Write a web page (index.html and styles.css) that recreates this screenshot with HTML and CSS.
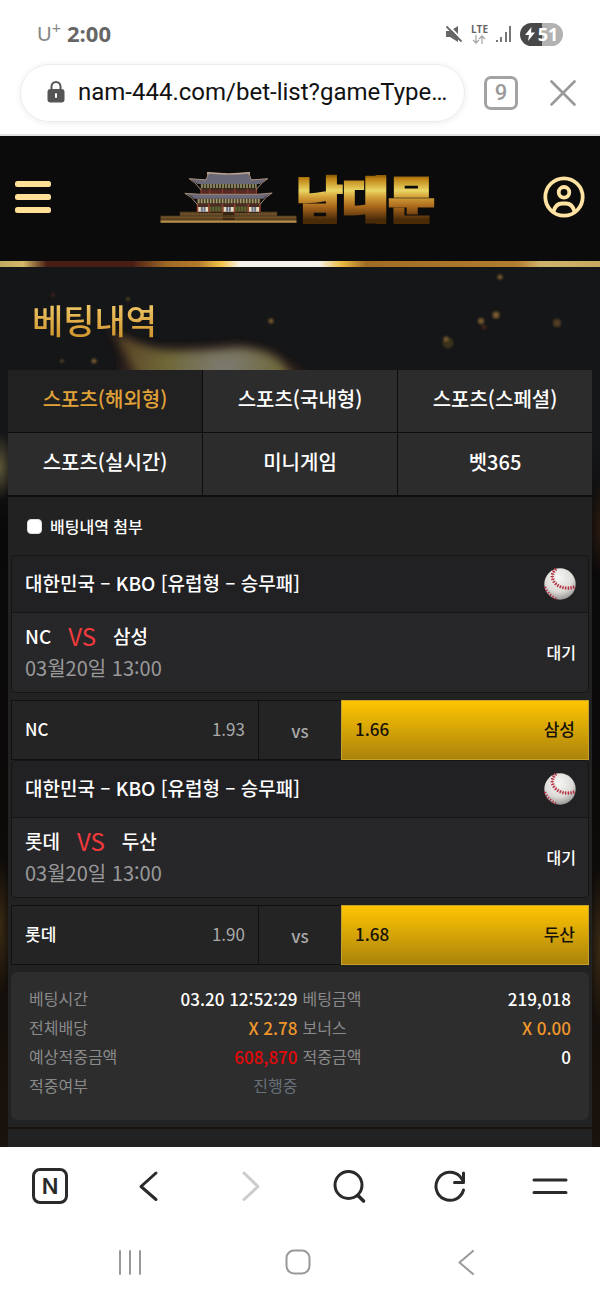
FILE: index.html
```html
<!DOCTYPE html>
<html lang="ko">
<head>
<meta charset="utf-8">
<meta name="viewport" content="width=device-width, initial-scale=1">
<title>베팅내역</title>
<link rel="stylesheet" href="styles.css">
</head>
<body>
<svg class="defs" aria-hidden="true">
  <defs>
    <radialGradient id="ballShade" cx="0.45" cy="0.3" r="0.75">
      <stop offset="0" stop-color="#f7f7f5"/><stop offset="0.6" stop-color="#dcdbd8"/><stop offset="1" stop-color="#8c8a88"/>
    </radialGradient>
    <symbol id="baseball" viewBox="0 0 32 32">
      <circle cx="16" cy="16" r="15.7" fill="url(#ballShade)"/>
      <path d="M12 1C6 6 8 14 14 17.500C19 20.500 26 21 31 18.500" fill="none" stroke="#c98a8c" stroke-width="0.8"/>
      <path d="M12 1C6 6 8 14 14 17.500C19 20.500 26 21 31 18.500" fill="none" stroke="#b5283c" stroke-width="3.400" stroke-dasharray="1.200 1.500"/>
      <path d="M1 19C3.500 25 8 29 13 31" fill="none" stroke="#b5283c" stroke-width="2.400" stroke-dasharray="1.200 1.800"/>
    </symbol>
  </defs>
</svg>

<header class="browser">
  <div class="status">
    <div class="status-left"><span class="carrier">U<sup>+</sup></span><span class="clock">2:00</span></div>
    <div class="status-right">
      <svg width="18" height="18" viewBox="0 0 18 18" aria-label="무음">
        <path d="M1 6h4l8-5v16L5 12H1z" fill="#666"/>
        <path d="M3 0L18 15.500" stroke="#fff" stroke-width="1.800"/>
        <path d="M1.500 1.500L16.500 16.500" stroke="#666" stroke-width="1.800"/>
      </svg>
      <span class="lte">LTE<svg width="14" height="9" viewBox="0 0 14 9" fill="none" stroke="#aaa" stroke-width="1.300"><path d="M4 0v8M1 5l3 3l3-3M10 9V1M7 4l3-3l3 3"/></svg></span>
      <svg width="16" height="17" viewBox="0 0 16 17" fill="#777" aria-label="신호"><path d="M0 14h2v2H0zM4 11h2v5H4zM9 6h2v10H9zM13 0h2v16h-2z"/></svg>
      <span class="battery"><svg width="10" height="14" viewBox="0 0 10 14"><path d="M6.500 0L0 8h4L3 14l7-8.500H6z" fill="#fff"/></svg>51</span>
    </div>
  </div>
  <div class="address-row">
    <label class="address">
      <svg width="18" height="22" viewBox="0 0 18 22" aria-hidden="true">
        <path d="M4.500 9V5.500a4.500 4.500 0 0 1 9 0V9" fill="none" stroke="#555" stroke-width="2"/>
        <rect x="0.500" y="8" width="17" height="13.500" rx="3" fill="#555"/><rect x="8" y="12" width="2" height="5" rx="1" fill="#fff"/>
      </svg>
      <input class="address-input" type="text" aria-label="주소" value="nam-444.com/bet-list?gameType…">
    </label>
    <button class="tab-count" type="button" aria-label="탭">9</button>
    <button class="plain" type="button" aria-label="닫기">
      <svg width="26" height="26" viewBox="0 0 26 26" fill="none" stroke="#999" stroke-width="2.600" stroke-linecap="round"><path d="M1.500 1.500L24.500 24.500M24.500 1.500L1.500 24.500"/></svg>
    </button>
  </div>
</header>

<div class="site-header">
  <button class="plain" type="button" aria-label="메뉴">
    <svg width="36" height="32" viewBox="0 0 36 32" fill="#ffe096"><rect y="0" width="36" height="6" rx="2.500"/><rect y="13" width="36" height="6" rx="2.500"/><rect y="26" width="36" height="6" rx="2.500"/></svg>
  </button>
  <a class="logo" href="#">
    <svg width="137" height="51" viewBox="483 130 410 153" aria-hidden="true">
      <path d="M604 163H774V196H604z" fill="#3d2a20"/>
      <path d="M604 184H774V196H604z" fill="#592a24"/>
      <path d="M606 172H772" stroke="#8d9468" stroke-width="12" stroke-dasharray="5 4"/>
      <path d="M632 178V196M670 178V196M707 178V196M746 178V196M606 178V196M772 178V196" stroke="#8a3a2c" stroke-width="3"/>
      <path d="M622 152L628 133Q690 140 748 133L755 152L806 150Q790 158 782 166H595Q588 158 570 150Z" fill="#686879"/>
      <path d="M626 138V132Q690 140 750 132V138" fill="none" stroke="#b5a18e" stroke-width="5"/>
      <path d="M570 150L621 154L627 136M750 136L756 154L806 150M570 150Q586 158 606 184M806 150Q790 158 770 184" fill="none" stroke="#a48b79" stroke-width="3"/>
      <path d="M593 206H784V252H593z" fill="#4a2c22"/>
      <path d="M596 217H781" stroke="#9aa06c" stroke-width="13" stroke-dasharray="5 4"/>
      <path d="M630 241H668M708 241H746" stroke="#59642f" stroke-width="15" stroke-dasharray="7 2"/>
      <path d="M597 242H628M673 242H704M749 242H780" stroke="#e9dfc4" stroke-width="14"/>
      <path d="M605 242H620M681 242H696M757 242H772" stroke="#687287" stroke-width="14" stroke-dasharray="6 2"/>
      <path d="M595 226V252M629 226V252M670 226V252M706 226V252M747 226V252M782 226V252" stroke="#9a432d" stroke-width="4"/>
      <path d="M557 194L605 197H773L819 193Q802 201 792 210H584Q576 201 557 194Z" fill="#686879"/>
      <path d="M557 194L605 197H773L819 193M557 194Q577 202 595 228M819 193Q800 202 782 228" fill="none" stroke="#a48b79" stroke-width="3"/>
      <path d="M542 249H592V253H784V249H834V261H892V276H484V261H542z" fill="#5b4322"/>
      <path d="M488 266H890M546 256H832" stroke="#86673a" stroke-width="3" stroke-dasharray="5 3"/>
      <path d="M671 252H706V275H671z" fill="#39250f"/>
      <path d="M484 279H892" stroke="#b98f4c" stroke-width="7"/>
      <path d="M671 262H706M671 267H706" stroke="#806138" stroke-width="2"/>
    </svg>
    <span class="logo-text">남대문</span>
  </a>
  <button class="plain" type="button" aria-label="내 정보">
    <svg width="42" height="42" viewBox="0 0 42 42" fill="none" stroke="#ffe3a2" stroke-width="3.800"><circle cx="21" cy="21" r="18.700"/><circle cx="21" cy="16.300" r="5.300"/><path d="M10.500 35.500C12 30 15 27.500 19 27.500H23C27 27.500 30 30 31.500 35.500"/></svg>
  </button>
</div>

<main class="page">
  <svg class="flame" width="600" height="300" viewBox="0 0 600 300" aria-hidden="true">
    <defs>
      <filter id="soft" x="-20%" y="-30%" width="140%" height="160%"><feGaussianBlur stdDeviation="4"/></filter>
      <filter id="speck"><feGaussianBlur stdDeviation="0.900"/></filter>
      <radialGradient id="fire" gradientUnits="userSpaceOnUse" cx="225" cy="104" r="105"><stop offset="0" stop-color="#7c7b72"/><stop offset="0.250" stop-color="#77735a"/><stop offset="0.550" stop-color="#6f6838"/><stop offset="1" stop-color="#5c4626"/></radialGradient>
    </defs>
    <path d="M106 60Q135 80 165 80T235 77Q268 78 285 93L325 120H110Q135 100 106 60Z" fill="#33201a" filter="url(#soft)"/>
    <path d="M116 66Q145 83 170 84T235 81Q264 81 280 94L305 125H145Q130 96 116 66Z" fill="url(#fire)" filter="url(#soft)"/>
    <g fill="#74592d" filter="url(#speck)"><circle cx="500" cy="10" r="2.500"/><circle cx="496" cy="48" r="3.500"/><circle cx="481" cy="54" r="3"/><circle cx="484" cy="60" r="2.500" fill="#42221a"/><circle cx="557" cy="56" r="4" fill="#513c22"/><circle cx="448" cy="76" r="5.500" fill="#3a301e"/><circle cx="446" cy="72" r="2.500"/><circle cx="271" cy="54" r="2.500"/><circle cx="53" cy="28" r="2" fill="#3b271e"/><circle cx="128" cy="32" r="1.500"/><circle cx="94" cy="94" r="2.500"/><circle cx="62" cy="94" r="1.500"/></g>
  </svg>
  <h1 class="title">베팅내역</h1>
  <nav class="tabs">
    <button class="tab tab-on" type="button">스포츠(해외형)</button>
    <button class="tab" type="button">스포츠(국내형)</button>
    <button class="tab" type="button">스포츠(스페셜)</button>
    <button class="tab" type="button">스포츠(실시간)</button>
    <button class="tab" type="button">미니게임</button>
    <button class="tab" type="button">벳365</button>
  </nav>

  <section class="panel">
    <label class="attach"><input type="checkbox" class="check">배팅내역 첨부</label>

    <article class="bet">
      <div class="card">
        <div class="league"><span>대한민국 – KBO [유럽형 – 승무패]</span><svg width="32" height="32" aria-label="야구"><use href="#baseball"/></svg></div>
        <div class="match">
          <div>
            <div class="teams"><span>NC</span><span class="versus">VS</span><span>삼성</span></div>
            <time class="when">03월20일 13:00</time>
          </div>
          <span class="state">대기</span>
        </div>
      </div>
      <div class="odds">
        <div class="pick"><span>NC</span><span class="rate">1.93</span></div>
        <div class="mid">vs</div>
        <div class="pick pick-on"><span>1.66</span><span>삼성</span></div>
      </div>
    </article>

    <article class="bet">
      <div class="card">
        <div class="league"><span>대한민국 – KBO [유럽형 – 승무패]</span><svg width="32" height="32" aria-label="야구"><use href="#baseball"/></svg></div>
        <div class="match">
          <div>
            <div class="teams"><span>롯데</span><span class="versus">VS</span><span>두산</span></div>
            <time class="when">03월20일 13:00</time>
          </div>
          <span class="state">대기</span>
        </div>
      </div>
      <div class="odds">
        <div class="pick"><span>롯데</span><span class="rate">1.90</span></div>
        <div class="mid">vs</div>
        <div class="pick pick-on"><span>1.68</span><span>두산</span></div>
      </div>
    </article>

    <dl class="summary">
      <div class="item"><dt>베팅시간</dt><dd>03.20 12:52:29</dd></div>
      <div class="item"><dt>베팅금액</dt><dd>219,018</dd></div>
      <div class="item"><dt>전체배당</dt><dd class="orange">X 2.78</dd></div>
      <div class="item"><dt>보너스</dt><dd class="orange">X 0.00</dd></div>
      <div class="item"><dt>예상적중금액</dt><dd class="red">608,870</dd></div>
      <div class="item"><dt>적중금액</dt><dd>0</dd></div>
      <div class="item"><dt>적중여부</dt><dd class="pending">진행중</dd></div>
    </dl>
  </section>
  <section class="panel panel-next"></section>
</main>

<nav class="toolbar">
  <button class="plain" type="button" aria-label="홈"><span class="home-n">N</span></button>
  <button class="plain" type="button" aria-label="뒤로"><svg width="36" height="36" viewBox="0 0 36 36"><path d="M24 5L9 18.500L24 31.500"/></svg></button>
  <button class="plain dim" type="button" aria-label="앞으로"><svg width="36" height="36" viewBox="0 0 36 36"><path d="M12 5L26 18.500L12 31.500"/></svg></button>
  <button class="plain" type="button" aria-label="검색"><svg width="36" height="36" viewBox="0 0 36 36"><circle cx="16.500" cy="17" r="13.500"/><path d="M26.500 28L31.500 33" stroke-width="3.600"/></svg></button>
  <button class="plain" type="button" aria-label="새로고침"><svg width="36" height="36" viewBox="0 0 36 36"><path d="M31.500 22A14 14 0 1 1 28 8.500L31.500 13.500M22.500 14.500H31.500V5"/></svg></button>
  <button class="plain" type="button" aria-label="더보기"><svg width="36" height="36" viewBox="0 0 36 36"><path d="M2 12H34M2 24.500H34"/></svg></button>
</nav>
<nav class="system">
  <button class="plain" type="button" aria-label="최근 앱"><svg width="26" height="26" viewBox="0 0 26 26"><path d="M3 2V25M13 2V25M23 2V25"/></svg></button>
  <button class="plain" type="button" aria-label="홈 화면"><svg width="26" height="26" viewBox="0 0 26 26"><rect x="1.500" y="1.500" width="23" height="23" rx="7.500"/></svg></button>
  <button class="plain" type="button" aria-label="이전"><svg width="26" height="26" viewBox="0 0 26 26"><path d="M20 2L6.500 13.500L20 25"/></svg></button>
</nav>
</body>
</html>
```

FILE: styles.css
```css
* { box-sizing: border-box; }
body {
  margin: 0;
  background: #fff;
  color: #fff;
  font-family: "Noto Sans CJK KR", sans-serif;
  font-size: 16px;
  font-weight: 500;
}
button, input { font: inherit; margin: 0; }
svg { display: block; flex: none; }
.defs { position: absolute; width: 0; height: 0; }
.plain {
  border: 0;
  padding: 0;
  background: none;
  display: flex;
  align-items: center;
  justify-content: center;
}

/* Browser chrome */
.browser {
  height: 136px;
  border-bottom: 2px solid #e2e2e2;
  background: #fff;
}
.status {
  display: flex;
  justify-content: space-between;
  align-items: center;
  padding: 20px 37px 0;
  height: 48px;
  color: #666;
  font-family: "Open Sans", sans-serif;
}
.status-left { display: flex; align-items: center; gap: 6px; padding-bottom: 2px; }
.carrier { font-family: Lato, sans-serif; font-weight: 400; font-size: 20px; line-height: 24px; color: #888; }
.carrier sup { font-size: 16px; line-height: 0; }
.clock { font-size: 22px; font-weight: 700; line-height: 28px; }
.status-right { display: flex; align-items: center; gap: 8px; }
.lte {
  display: flex;
  flex-direction: column;
  align-items: center;
  gap: 1px;
  font-size: 10px;
  line-height: 9px;
  font-weight: 700;
}
.battery {
  display: flex;
  align-items: center;
  justify-content: center;
  gap: 3px;
  width: 43px;
  height: 23px;
  border-radius: 12px;
  background: linear-gradient(90deg, #484848 50%, #b2b2b2 50%);
  color: #fff;
  font-size: 18px;
  font-weight: 700;
}
.address-row {
  display: flex;
  align-items: center;
  padding: 16px 24px 0 20px;
}
.address {
  flex: 1;
  min-width: 0;
  display: flex;
  align-items: center;
  gap: 13px;
  height: 58px;
  margin-right: 19px;
  padding: 0 12px 2px 26px;
  border: 1px solid #ececec;
  border-radius: 29px;
  box-shadow: 0 1px 6px rgba(0, 0, 0, 0.08);
}
.address-input {
  flex: 1;
  min-width: 0;
  border: 0;
  padding: 0;
  outline: 0;
  color: #111;
  background: none;
  font-family: Roboto, sans-serif;
  font-weight: 400;
  font-size: 24px;
  line-height: 32px;
}
.tab-count {
  width: 34px;
  height: 34px;
  margin-right: 32px;
  padding: 0;
  border: 3px solid #a3a3a3;
  border-radius: 7px;
  background: none;
  color: #999;
  font-family: Roboto, sans-serif;
  font-size: 22px;
  line-height: 28px;
}

/* Site header */
.site-header {
  display: flex;
  align-items: center;
  justify-content: space-between;
  padding: 0 15px 3px;
  height: 131px;
  background: #0b0b0b;
  border-bottom: 6px solid;
  border-image: linear-gradient(90deg, #bda860 0, #d4b868 4%, #471c13 8%, #471c13 22%, #a26a26 28%, #b4782a 33%, #f2c44b 37%, #f6f2ec 40%, #f6f2ec 53%, #eab940 57%, #a16b24 61%, #b27d2e 86%, #cfb46c 90%, #c5a95e 100%) 1;
}
.logo { display: flex; align-items: center; text-decoration: none; }
.logo-text {
  font-size: 50px;
  line-height: 54px;
  font-weight: 900;
  color: transparent;
  -webkit-text-stroke: 3px transparent;
  background: linear-gradient(#7a4d08 8%, #bd8112 16%, #ead664 38%, #d4a038 50%, #a9671c 68%, #4a2b08 92%);
  background-clip: text;
  -webkit-background-clip: text;
}

/* Content */
.page {
  position: relative;
  overflow: hidden;
  padding: 0 8px;
  background:
    radial-gradient(ellipse 14px 34px at 0 200px, #5b5538, transparent),
    radial-gradient(ellipse 12px 70px at 0 660px, #3a2a12, transparent),
    radial-gradient(ellipse 12px 80px at 100% 680px, #3a2a14, transparent),
    radial-gradient(ellipse 12px 50px at 100% 260px, #2a1a10, transparent),
    linear-gradient(#151618 0, #151618 180px, #0a090a 260px, #0c0a09 560px, #1a120c 880px);
}
.flame { position: absolute; top: 0; left: 0; }
.title {
  position: relative;
  margin: 0;
  padding: 29px 24px 26px;
  font-size: 34px;
  line-height: 48px;
  font-weight: 500;
  color: transparent;
  background: linear-gradient(#f0c868 35%, #cf922a 70%);
  background-clip: text;
  -webkit-background-clip: text;
}
.tabs {
  position: relative;
  display: grid;
  grid-template-columns: repeat(3, 1fr);
  gap: 1px;
  background: #0d0d0d;
}
.tab {
  height: 62px;
  padding: 0 0 5px;
  border: 0;
  background: #2c2c2c;
  color: #fff;
  font-size: 20px;
}
.tab-on { background: #212121; color: #e0a238; }
.panel {
  position: relative;
  margin-top: 2px;
  padding: 0 3px 7px;
  background: #222;
}
.panel-next { min-height: 18px; padding: 0; }
.attach {
  display: flex;
  align-items: center;
  gap: 8px;
  height: 58px;
  padding: 0 16px;
  font-size: 16px;
}
.check {
  appearance: none;
  width: 15px;
  height: 15px;
  border: 1px solid #ddd;
  border-radius: 4px;
  background: #fff;
}
.card {
  border: 1px solid #151515;
  border-radius: 4px;
  background: #27272a;
}
.league {
  display: flex;
  align-items: center;
  justify-content: space-between;
  height: 57px;
  padding: 0 12px 0 13px;
  border-bottom: 1px solid #151515;
  border-radius: 4px 4px 0 0;
  background: #212124;
  font-size: 19px;
}
.league span { padding-bottom: 4px; }
.match {
  display: flex;
  align-items: center;
  justify-content: space-between;
  height: 79px;
  padding: 0 12px 2px 13px;
}
.teams {
  display: flex;
  align-items: center;
  gap: 17px;
  font-size: 19px;
  line-height: 32px;
}
.versus { color: #f23a3c; font-size: 24px; font-weight: 400; }
.when { display: block; font-size: 20px; line-height: 32px; font-weight: 400; color: #999; }
.state { font-size: 16px; }
.odds {
  display: grid;
  grid-template-columns: 3fr 1fr 3fr;
  gap: 1px;
  margin-top: 7px;
  border: 1px solid #111;
  background: #111;
}
.pick, .mid {
  display: flex;
  align-items: center;
  justify-content: space-between;
  height: 58px;
  padding: 0 13px 4px;
  background: #242424;
  font-size: 17px;
}
.mid { justify-content: center; padding-bottom: 0; color: #aaa; }
.rate { color: #aaa; font-weight: 400; }
.pick-on {
  background: linear-gradient(#fec502, #ab830c);
  box-shadow: 0 0 0 1px #c5a128;
  color: #16120a;
}
.summary {
  display: grid;
  grid-template-columns: 1fr 1fr;
  column-gap: 5px;
  align-content: start;
  min-height: 148px;
  margin: 7px 0 0;
  padding: 12px 18px 20px;
  border-radius: 6px;
  background: #2d2d2d;
}
.item { display: flex; justify-content: space-between; line-height: 29px; }
dt { color: #8a8a8a; font-size: 16px; font-weight: 400; }
dd { margin: 0; font-size: 17px; }
.orange { color: #f0962a; }
.red { color: #e60808; }
.pending { color: #68707a; font-size: 16px; font-weight: 400; }

/* Bottom bars */
.toolbar {
  display: grid;
  grid-template-columns: repeat(6, 1fr);
  height: 78px;
  background: #fff;
}
.toolbar svg, .system svg { fill: none; stroke-linecap: round; stroke-linejoin: round; }
.toolbar svg { stroke: #2a2a2a; stroke-width: 3; }
.toolbar .dim svg { stroke: #ccc; }
.home-n {
  width: 36px;
  height: 36px;
  border: 3px solid #2a2a2a;
  border-radius: 8px;
  color: #2a2a2a;
  font-family: Inter, sans-serif;
  font-size: 22px;
  line-height: 30px;
  font-weight: 600;
}
.system {
  display: flex;
  align-items: center;
  justify-content: space-between;
  height: 75px;
  padding: 0 121px 2px 117px;
  background: #fff;
}
.system svg { stroke: #999; stroke-width: 2; }
```
